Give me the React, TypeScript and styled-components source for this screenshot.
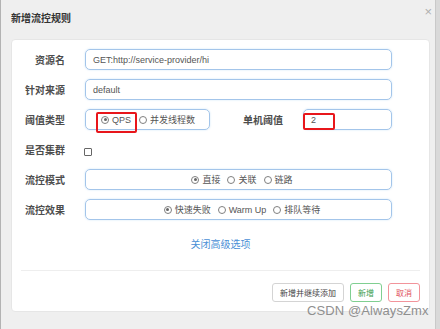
import styled, { createGlobalStyle } from 'styled-components'

const GlobalStyle = createGlobalStyle`
  html, body {
    margin: 0;
    padding: 0;
    background: #d9d9d9;
  }
  body {
    font-family: "Liberation Sans", "Noto Sans CJK SC", sans-serif;
  }
`

const Modal = styled.div`
  position: relative;
  width: 436px;
  height: 329px;
  box-sizing: border-box;
  background: #efefef;
  border-left: 1px solid #b3b3b3;
  border-right: 1px solid #c9c9c9;
`

const Header = styled.div`
  display: flex;
  align-items: center;
  justify-content: space-between;
  height: 39px;
  padding: 0 3px 0 10px;
  box-sizing: border-box;
`

const Title = styled.div`
  font-size: 10px;
  font-weight: 700;
  color: #333;
  margin-top: -4px;
`

const Close = styled.div`
  font-size: 13px;
  line-height: 1;
  color: #b0b0b0;
  align-self: flex-start;
  margin-top: 5px;
`

const Card = styled.div`
  margin: 0 5px 0 10px;
  height: 273px;
  box-sizing: border-box;
  background: #fff;
  border: 1px solid #e6e6e6;
  border-radius: 4px;
  padding: 9px 9px 0 9px;
`

const Row = styled.div`
  display: flex;
  align-items: center;
  height: 21px;
  margin-bottom: 9px;
`

const Label = styled.div<{ $width?: number; $ml?: number }>`
  width: ${(p) => p.$width ?? 44}px;
  margin-left: ${(p) => p.$ml ?? 0}px;
  margin-right: 20px;
  text-align: right;
  font-size: 10px;
  font-weight: 700;
  color: #4d4d4d;
  white-space: nowrap;
`

const Field = styled.div<{ $width: number; $center?: boolean }>`
  position: relative;
  display: flex;
  align-items: center;
  justify-content: ${(p) => (p.$center ? 'center' : 'flex-start')};
  width: ${(p) => p.$width}px;
  height: 21px;
  box-sizing: border-box;
  border: 1px solid #a3c5ea;
  border-radius: 5px;
  padding-left: 7px;
  font-size: 9px;
  color: #555;
  box-shadow: 0 0 2px rgba(102, 175, 233, 0.35);
`

const Radio = styled.span<{ $checked?: boolean }>`
  display: inline-block;
  position: relative;
  width: 8px;
  height: 8px;
  box-sizing: border-box;
  border: 1px solid #808080;
  border-radius: 50%;
  margin-right: 3px;
  &::after {
    content: '';
    display: ${(p) => (p.$checked ? 'block' : 'none')};
    position: absolute;
    left: 1.5px;
    top: 1.5px;
    width: 3px;
    height: 3px;
    border-radius: 50%;
    background: #666;
  }
`

const Option = styled.label<{ $gap?: number }>`
  display: inline-flex;
  align-items: center;
  margin-right: ${(p) => p.$gap ?? 7}px;
  font-size: 9px;
  color: #555;
  white-space: nowrap;
`

const Checkbox = styled.span`
  display: inline-block;
  width: 8px;
  height: 8px;
  box-sizing: border-box;
  border: 1px solid #666;
  border-radius: 1px;
  margin-left: -1px;
  margin-top: 4px;
`

const Mark = styled.div<{ $l: number; $t: number; $w: number; $h: number }>`
  position: absolute;
  left: ${(p) => p.$l}px;
  top: ${(p) => p.$t}px;
  width: ${(p) => p.$w}px;
  height: ${(p) => p.$h}px;
  box-sizing: border-box;
  border: 2px solid #e8161b;
  border-radius: 2px;
`

const Toggle = styled.div`
  text-align: center;
  font-size: 10px;
  color: #4a8fd6;
  margin-top: 18px;
  line-height: 14px;
`

const Divider = styled.div`
  height: 1px;
  background: #eeeeee;
  margin-top: 18px;
`

const Footer = styled.div`
  display: flex;
  justify-content: flex-end;
  gap: 6px;
  margin-top: 12px;
`

const Button = styled.button<{ $tone?: 'green' | 'red' }>`
  height: 19px;
  padding: 0 7px;
  background: #fff;
  border-radius: 3px;
  font-family: inherit;
  font-size: 8px;
  border: 1px solid
    ${(p) => (p.$tone === 'green' ? '#80cf91' : p.$tone === 'red' ? '#f2949b' : '#d4d4d4')};
  color: ${(p) => (p.$tone === 'green' ? '#3a9d4e' : p.$tone === 'red' ? '#e0505b' : '#444')};
`

const Watermark = styled.div`
  position: absolute;
  left: 306px;
  top: 303px;
  font-size: 13px;
  color: #8f8f8f;
  letter-spacing: 0.1px;
  white-space: nowrap;
`

export default function App() {
  return (
    <>
      <GlobalStyle />
      <Modal>
        <Header>
          <Title>新增流控规则</Title>
          <Close>×</Close>
        </Header>
        <Card>
          <Row>
            <Label>资源名</Label>
            <Field $width={307}>GET:http://service-provider/hi</Field>
          </Row>
          <Row>
            <Label>针对来源</Label>
            <Field $width={307}>default</Field>
          </Row>
          <Row>
            <Label>阈值类型</Label>
            <Field $width={125} style={{ paddingLeft: 15 }}>
              <Option $gap={8}>
                <Radio $checked />
                QPS
              </Option>
              <Option>
                <Radio />
                并发线程数
              </Option>
              <Mark $l={10} $t={2} $w={41} $h={21} />
            </Field>
            <Label $width={40} $ml={33}>
              单机阈值
            </Label>
            <Field $width={89}>
              2
              <Mark $l={-1} $t={3} $w={32} $h={17} />
            </Field>
          </Row>
          <Row>
            <Label>是否集群</Label>
            <Checkbox />
          </Row>
          <Row>
            <Label>流控模式</Label>
            <Field $width={307} $center>
              <Option>
                <Radio $checked />
                直接
              </Option>
              <Option>
                <Radio />
                关联
              </Option>
              <Option $gap={0}>
                <Radio />
                链路
              </Option>
            </Field>
          </Row>
          <Row>
            <Label>流控效果</Label>
            <Field $width={307} $center>
              <Option>
                <Radio $checked />
                快速失败
              </Option>
              <Option>
                <Radio />
                Warm Up
              </Option>
              <Option $gap={0}>
                <Radio />
                排队等待
              </Option>
            </Field>
          </Row>
          <Toggle>关闭高级选项</Toggle>
          <Divider />
          <Footer>
            <Button>新增并继续添加</Button>
            <Button $tone="green">新增</Button>
            <Button $tone="red">取消</Button>
          </Footer>
        </Card>
        <Watermark>CSDN @AlwaysZmx</Watermark>
      </Modal>
    </>
  )
}
